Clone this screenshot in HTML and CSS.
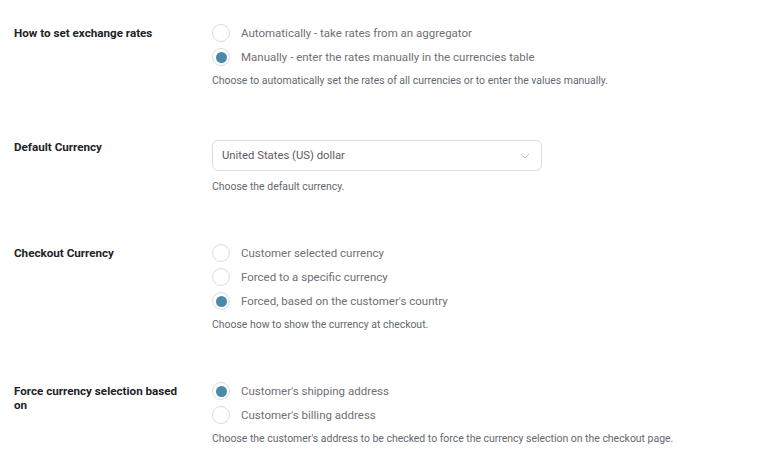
FILE: index.html
```html
<!DOCTYPE html>
<html lang="en">
<head>
<meta charset="utf-8">
<title>Currency settings</title>
<link rel="stylesheet" href="styles.css">
</head>
<body>
<div class="settings">
  <div class="row">
    <div class="label">How to set exchange rates</div>
    <div class="field">
      <div class="option"><span class="radio"></span><span class="opt-text">Automatically - take rates from an aggregator</span></div>
      <div class="option"><span class="radio checked"></span><span class="opt-text">Manually - enter the rates manually in the currencies table</span></div>
      <p class="desc">Choose to automatically set the rates of all currencies or to enter the values manually.</p>
    </div>
  </div>
  <div class="row">
    <div class="label">Default Currency</div>
    <div class="field">
      <div class="select"><span class="select-text">United States (US) dollar</span>
        <svg class="chev" width="10" height="6" viewBox="0 0 10 6"><path d="M1 1l4 4 4-4" fill="none" stroke="#c3c4c7" stroke-width="1"/></svg>
      </div>
      <p class="desc">Choose the default currency.</p>
    </div>
  </div>
  <div class="row">
    <div class="label">Checkout Currency</div>
    <div class="field">
      <div class="option"><span class="radio"></span><span class="opt-text">Customer selected currency</span></div>
      <div class="option"><span class="radio"></span><span class="opt-text">Forced to a specific currency</span></div>
      <div class="option"><span class="radio checked"></span><span class="opt-text">Forced, based on the customer's country</span></div>
      <p class="desc">Choose how to show the currency at checkout.</p>
    </div>
  </div>
  <div class="row">
    <div class="label">Force currency selection based on</div>
    <div class="field">
      <div class="option"><span class="radio checked"></span><span class="opt-text">Customer's shipping address</span></div>
      <div class="option"><span class="radio"></span><span class="opt-text">Customer's billing address</span></div>
      <p class="desc">Choose the customer's address to be checked to force the currency selection on the checkout page.</p>
    </div>
  </div>
</div>
</body>
</html>
```
FILE: styles.css
```css
html, body {
  margin: 0;
  padding: 0;
  background: #ffffff;
}
body {
  font-family: Roboto, "Liberation Sans", sans-serif;
}
.settings {
  padding: 21px 0 0 14px;
  display: flex;
  flex-direction: column;
  gap: 46px;
}
.row {
  display: grid;
  grid-template-columns: 198px 1fr;
}
.label {
  padding-top: 5px;
  padding-right: 20px;
  font-size: 11.65px;
  font-weight: 700;
  line-height: 14px;
  color: #1d2327;
}
.field {
  display: flex;
  flex-direction: column;
}
.option {
  display: flex;
  align-items: center;
  height: 24px;
}
.radio {
  box-sizing: border-box;
  width: 18px;
  height: 18px;
  border: 1px solid #dcdcde;
  border-radius: 50%;
  background: #fff;
  margin-right: 11px;
  display: flex;
  align-items: center;
  justify-content: center;
  flex: none;
}
.radio.checked::after {
  content: "";
  width: 11px;
  height: 11px;
  border-radius: 50%;
  background: #4a89a8;
}
.opt-text {
  font-size: 11.5px;
  color: #736d75;
}
.desc {
  margin: 4px 0 0;
  font-size: 10.45px;
  line-height: 16px;
  color: #646970;
}
.select {
  box-sizing: border-box;
  margin-top: 5px;
  margin-bottom: 4px;
  width: 330px;
  height: 31px;
  border: 1px solid #dcdcde;
  border-radius: 6px;
  display: flex;
  align-items: center;
  justify-content: space-between;
  padding: 0 11px 0 9px;
}
.select-text {
  font-size: 11.3px;
  color: #5f5a62;
}
.chev {
  display: block;
}
```
